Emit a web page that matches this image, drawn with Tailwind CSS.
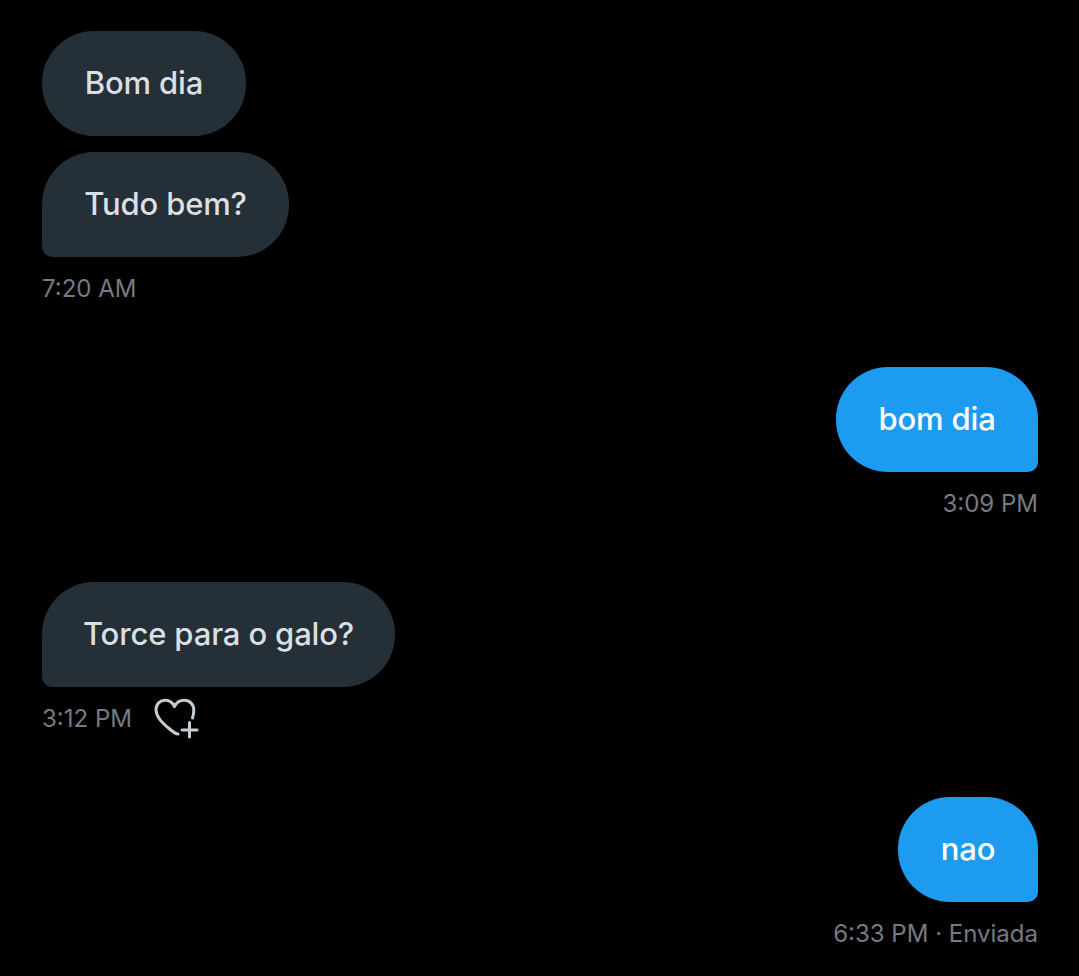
<!DOCTYPE html>
<html lang="en">
<head>
  <meta charset="UTF-8" />
  <title>Mensagens</title>
  <script src="https://cdn.jsdelivr.net/npm/@tailwindcss/browser@4"></script>
</head>
<body class="bg-black font-['Inter',sans-serif]">
  <div class="w-[1079px] h-[976px] overflow-hidden pl-[42px] pr-[41px] pt-[31px] flex flex-col">
    <!-- Received -->
    <div class="flex flex-col items-start gap-4">
      <div class="w-[204px] h-[105px] flex items-center justify-center bg-[#242f37] text-[#dcdfe2] text-[31px] font-[550] tracking-[-0.15px] rounded-[52px]">Bom dia</div>
      <div class="w-[247px] h-[105px] flex items-center justify-center bg-[#242f37] text-[#dcdfe2] text-[31px] font-[550] tracking-[-0.15px] rounded-[52px] rounded-bl-[10px]">Tudo bem?</div>
    </div>
    <div class="h-[62px] pt-[2px] flex items-center text-[24px] text-[#767b80]">7:20 AM</div>

    <!-- Sent -->
    <div class="mt-12 flex justify-end">
      <div class="w-[202px] h-[105px] flex items-center justify-center bg-[#1d9bf0] text-white text-[31px] font-[550] tracking-[-0.15px] rounded-[52px] rounded-br-[10px]">bom dia</div>
    </div>
    <div class="h-[62px] pt-[2px] flex items-center justify-end text-[24px] text-[#767b80]">3:09 PM</div>

    <!-- Received -->
    <div class="mt-12 flex justify-start">
      <div class="w-[353px] h-[105px] flex items-center justify-center bg-[#242f37] text-[#dcdfe2] text-[31px] font-[550] tracking-[-0.15px] rounded-[52px] rounded-bl-[10px]">Torce para o galo?</div>
    </div>
    <div class="h-[62px] pt-[2px] flex items-center gap-[22px] text-[24px] text-[#767b80]">
      <span>3:12 PM</span>
      <svg class="w-[46px] h-[42px]" viewBox="0 0 46 42" fill="none" stroke="#c3ccd3" stroke-width="3" stroke-linecap="round" stroke-linejoin="round">
        <path d="M24 36 C21.5 36 19 34 15 30.5 C8 24.5 2 19 2 11.5 C2 6 6 2.3 11 2.3 C15 2.3 18.5 4.5 20.5 8.5 C22.5 4.5 26 2.3 30 2.3 C36 2.3 39.8 6.5 39.8 12 C39.8 15 39.3 17.5 38.5 20"/>
        <path d="M35.5 24.5 V39 M28 32 H43"/>
      </svg>
    </div>

    <!-- Sent -->
    <div class="mt-12 flex justify-end">
      <div class="w-[140px] h-[105px] flex items-center justify-center bg-[#1d9bf0] text-white text-[31px] font-[550] tracking-[-0.15px] rounded-[52px] rounded-br-[10px]">nao</div>
    </div>
    <div class="h-[62px] pt-[2px] flex items-center justify-end text-[24px] text-[#767b80]">6:33 PM · Enviada</div>
  </div>
</body>
</html>
